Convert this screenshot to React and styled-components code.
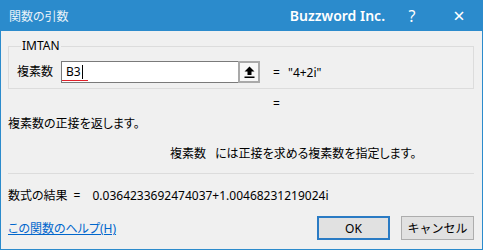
import React from 'react';
import styled, { createGlobalStyle } from 'styled-components';

const colors = {
  accent: '#2b8bcc',
  face: '#f0f0f0',
  text: '#000000',
  line: '#dcdcdc',
  link: '#0066cc',
  btn: '#e1e1e1',
  btnBorder: '#adadad',
  okBorder: '#2a7bc4',
};

const GlobalStyle = createGlobalStyle`
  html, body {
    margin: 0;
    padding: 0;
    background: ${colors.face};
  }
  body {
    font-family: "Noto Sans", "Noto Sans CJK JP", sans-serif;
    font-size: 12px;
    color: ${colors.text};
    font-feature-settings: "palt";
  }
`;

const Window = styled.div`
  width: 483px;
  height: 250px;
  box-sizing: border-box;
  border: 1px solid ${colors.accent};
  border-top: none;
  background: ${colors.face};
  display: flex;
  flex-direction: column;
`;

const TitleBar = styled.div`
  height: 31px;
  margin: 0 -1px;
  background: ${colors.accent};
  color: #ffffff;
  display: flex;
  align-items: center;
  padding-left: 9px;
`;

const Title = styled.div`
  font-size: 12px;
  flex: 1;
  opacity: 0.9;
`;

const Brand = styled.div`
  font-size: 14px;
  font-weight: 600;
  margin-right: 4px;
`;

const TitleButton = styled.div`
  width: ${p => p.$w}px;
  text-align: center;
  font-size: ${p => p.$size}px;
`;

const Body = styled.div`
  flex: 1;
  padding: 8px 8px 0 7px;
  display: flex;
  flex-direction: column;
`;

const Group = styled.fieldset`
  margin: 0;
  padding: 8px 8px 5px 8px;
  border: 1px solid ${colors.line};
  display: flex;
  align-items: center;
`;

const Legend = styled.legend`
  padding: 0 1px;
  margin-left: 4px;
  font-size: 12px;
  line-height: 14px;
`;

const Label = styled.div`
  width: 44px;
  line-height: 22px;
`;

const Field = styled.div`
  width: 199px;
  height: 22px;
  box-sizing: border-box;
  border: 1px solid #7a7a7a;
  border-right: none;
  background: #ffffff;
  display: flex;
  position: relative;
`;

const FieldText = styled.div`
  flex: 1;
  padding-left: 4px;
  line-height: 20px;
  display: flex;
  align-items: center;
`;

const Caret = styled.span`
  display: inline-block;
  width: 1px;
  height: 14px;
  background: #000;
  margin-left: 1px;
`;

const Squiggle = styled.div`
  position: absolute;
  left: 0;
  bottom: 1px;
  width: 26px;
  height: 1px;
  background: #e0202a;
`;

const PickButton = styled.div`
  width: 22px;
  height: 22px;
  margin: -1px 0;
  box-sizing: border-box;
  border: 2px solid #a9a9a9;
  background: #f7f7f7;
  display: flex;
  align-items: center;
  justify-content: center;
`;

const Eq = styled.div`
  margin-left: 13px;
  width: 15px;
`;

const Value = styled.div``;

const TextLine = styled.div`
  height: ${p => p.$h}px;
  padding-left: ${p => p.$indent || 0}px;
  padding-top: ${p => p.$top || 0}px;
  display: flex;
  align-items: center;
`;

const Spacer = styled.span`
  display: inline-block;
  width: ${p => p.$w}px;
`;

const Separator = styled.div`
  height: 1px;
  background: ${colors.line};
`;

const Footer = styled.div`
  display: flex;
  align-items: center;
`;

const HelpLink = styled.a`
  flex: 1;
  color: ${colors.link};
  text-decoration: underline;
  cursor: pointer;
`;

const Button = styled.button`
  width: 73px;
  height: 24px;
  margin-left: ${p => p.$gap || 0}px;
  box-sizing: border-box;
  background: ${colors.btn};
  border: ${p => (p.$primary ? `2px solid ${colors.okBorder}` : `1px solid ${colors.btnBorder}`)};
  font-family: inherit;
  font-size: 12px;
  color: #000;
  padding: 0;
`;

const UpArrow = () => (
  <svg width="11" height="12" viewBox="0 0 11 12">
    <path d="M5.5 0.5 L10.5 5.5 L7.5 5.5 L7.5 9 L3.5 9 L3.5 5.5 L0.5 5.5 Z" fill="#000" />
    <rect x="0.5" y="10.5" width="10" height="1.5" fill="#000" />
  </svg>
);

export default function App() {
  return (
    <>
      <GlobalStyle />
      <Window>
        <TitleBar>
          <Title>関数の引数</Title>
          <Brand>Buzzword Inc.</Brand>
          <TitleButton $w={46} $size={16}>?</TitleButton>
          <TitleButton $w={48} $size={20}>×</TitleButton>
        </TitleBar>
        <Body>
          <Group>
            <Legend>IMTAN</Legend>
            <Label>複素数</Label>
            <Field>
              <FieldText>
                B3<Caret />
              </FieldText>
              <Squiggle />
              <PickButton>
                <UpArrow />
              </PickButton>
            </Field>
            <Eq>=</Eq>
            <Value>"4+2i"</Value>
          </Group>
          <TextLine $h={28} $indent={265}>=</TextLine>
          <TextLine $h={12}>複素数の正接を返します。</TextLine>
          <TextLine $h={41} $top={3} $indent={162}>
            複素数<Spacer $w={9} />には正接を求める複素数を指定します。
          </TextLine>
          <Separator />
          <TextLine $h={42}>
            数式の結果<Spacer $w={6} />=<Spacer $w={12} />0.0364233692474037+1.00468231219024i
          </TextLine>
          <Footer>
            <HelpLink>この関数のヘルプ(H)</HelpLink>
            <Button $primary>OK</Button>
            <Button $gap={11}>キャンセル</Button>
          </Footer>
        </Body>
      </Window>
    </>
  );
}
